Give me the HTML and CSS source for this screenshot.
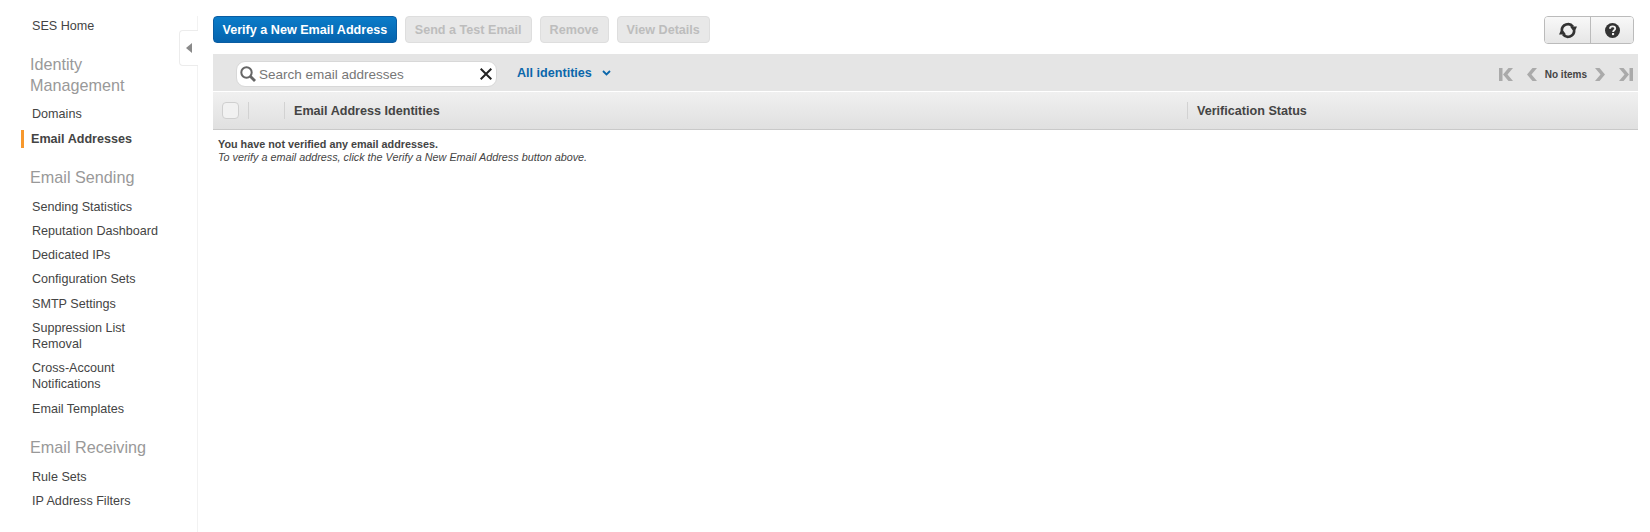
FILE: index.html
```html
<!DOCTYPE html>
<html lang="en">
<head>
<meta charset="utf-8">
<title>SES Email Addresses</title>
<link rel="stylesheet" href="styles.css">
</head>
<body>
<div class="page">
  <nav class="sidebar">
    <a class="nav-item home">SES Home</a>
    <h2 class="nav-heading">Identity Management</h2>
    <a class="nav-item">Domains</a>
    <a class="nav-item active">Email Addresses</a>
    <h2 class="nav-heading">Email Sending</h2>
    <a class="nav-item">Sending Statistics</a>
    <a class="nav-item">Reputation Dashboard</a>
    <a class="nav-item">Dedicated IPs</a>
    <a class="nav-item">Configuration Sets</a>
    <a class="nav-item">SMTP Settings</a>
    <a class="nav-item">Suppression List Removal</a>
    <a class="nav-item">Cross-Account Notifications</a>
    <a class="nav-item">Email Templates</a>
    <h2 class="nav-heading">Email Receiving</h2>
    <a class="nav-item">Rule Sets</a>
    <a class="nav-item">IP Address Filters</a>
    <div class="collapse"><svg width="6" height="10" viewBox="0 0 6 10"><path d="M6 0V10L0 5Z" fill="#8a8a8a"/></svg></div>
  </nav>
  <main class="main">
    <div class="toolbar">
      <button class="btn primary">Verify a New Email Address</button>
      <button class="btn disabled">Send a Test Email</button>
      <button class="btn disabled">Remove</button>
      <button class="btn disabled">View Details</button>
      <div class="tool-group">
        <button class="tool refresh" aria-label="Refresh">
          <svg width="18" height="17" viewBox="0 0 18 17"><path d="M2.800 8.500A6.200 6.200 0 0 1 14 4.800" fill="none" stroke="#333" stroke-width="2.700"/><path d="M11 4.500 18 4.500 15.300 10.500Z" fill="#333"/><path d="M15.200 8.500A6.200 6.200 0 0 1 4 12.200" fill="none" stroke="#333" stroke-width="2.700"/><path d="M7 12.500 0 12.500 2.700 6.500Z" fill="#333"/></svg>
        </button>
        <button class="tool help" aria-label="Help">
          <svg width="15" height="15" viewBox="0 0 15 15"><circle cx="7.500" cy="7.500" r="7.500" fill="#333"/><path d="M5 5.700C5.100 4.200 6.200 3.400 7.600 3.400 9.100 3.400 10.200 4.300 10.200 5.600 10.200 7.300 8.100 7.300 8.100 9" fill="none" stroke="#f0f0f0" stroke-width="1.900"/><rect x="7" y="10" width="2.100" height="2.100" fill="#f0f0f0"/></svg>
        </button>
      </div>
    </div>
    <div class="filter-bar">
      <div class="search">
        <svg class="search-icon" width="16" height="16" viewBox="0 0 16 16"><circle cx="6.500" cy="6.500" r="5.200" fill="none" stroke="#666" stroke-width="2"/><path d="M10.500 10.500 15 15" stroke="#666" stroke-width="2.800"/></svg>
        <span class="placeholder">Search email addresses</span>
        <svg class="clear-icon" width="12" height="12" viewBox="0 0 12 12"><path d="M.7.700 11.300 11.300M11.300.700 .7 11.300" stroke="#222" stroke-width="2"/></svg>
      </div>
      <a class="scope">All identities<svg width="9" height="6" viewBox="0 0 9 6"><path d="M1 1 4.500 4.500 8 1" fill="none" stroke="#0b67ab" stroke-width="1.800"/></svg></a>
      <div class="pager">
        <svg width="14" height="13" viewBox="0 0 14 13"><path d="M0 0H3.500V13H0ZM9.500 0 4 6.500 9.500 13H14L8.500 6.500 14 0Z" fill="#aaa"/></svg>
        <svg class="prev" width="10" height="13" viewBox="0 0 10 13"><path d="M5.500 0 0 6.500 5.500 13H10L4.500 6.500 10 0Z" fill="#aaa"/></svg>
        <span class="pager-text">No items</span>
        <svg class="next" width="10" height="13" viewBox="0 0 10 13"><path d="M4.500 0 10 6.500 4.500 13H0L5.500 6.500 0 0Z" fill="#aaa"/></svg>
        <svg class="last" width="14" height="13" viewBox="0 0 14 13"><path d="M14 0H10.500V13H14ZM4.500 0 10 6.500 4.500 13H0L5.500 6.500 0 0Z" fill="#aaa"/></svg>
      </div>
    </div>
    <div class="table-head">
      <div class="cell check"><span class="checkbox"></span></div>
      <div class="cell spacer"></div>
      <div class="cell identity">Email Address Identities</div>
      <div class="cell status">Verification Status</div>
    </div>
    <div class="empty">
      <strong>You have not verified any email addresses.</strong>
      <em>To verify a email address, click the Verify a New Email Address button above.</em>
    </div>
  </main>
</div>
</body>
</html>
```
FILE: styles.css
```css
* { box-sizing: border-box; }
html, body { margin: 0; height: 100%; background: #fff; overflow: hidden; }
body { font-family: "Liberation Sans", Arial, sans-serif; color: #444; }
.page { display: flex; height: 532px; padding-top: 16px; }

.sidebar {
  position: relative;
  width: 198px;
  flex: none;
  border-right: 1px solid #f2f2f2;
  padding: 1.6px 24px 0 0;
}
.nav-item {
  display: block;
  padding: 0 0 8px 32px;
  font-size: 12.6px;
  line-height: 16.2px;
  color: #444;
}
.nav-item.active {
  position: relative;
  padding-left: 31px;
  font-weight: 700;
}
.nav-item.active::before {
  content: "";
  position: absolute;
  left: 21px;
  top: -1px;
  width: 3px;
  height: 18px;
  background: #f7982d;
}
.nav-heading {
  margin: 0;
  padding: 12.6px 0 10.5px 30px;
  font-size: 16.2px;
  font-weight: 400;
  line-height: 20.8px;
  color: #999;
}
.collapse {
  position: absolute;
  top: 14px;
  right: -1px;
  width: 19px;
  height: 36px;
  display: flex;
  align-items: center;
  justify-content: center;
  background: #fff;
  border: 1px solid #ececec;
  border-right: 0;
  border-radius: 4px 0 0 4px;
}

.main { flex: 1; min-width: 0; padding: 0 12px 0 15px; }
.toolbar { display: flex; align-items: flex-start; gap: 8px; height: 38px; }
.btn {
  height: 27px;
  padding: 1px 9px 0;
  border-radius: 4px;
  font: 700 12.6px/1 "Liberation Sans", Arial, sans-serif;
  cursor: default;
}
.btn.primary {
  padding: 1px 8.5px 0;
  color: #fff;
  background: linear-gradient(#0a7cc9, #0563ad);
  border: 1px solid #0a5da2;
}
.btn.disabled {
  color: #bdbdbd;
  background: #e8e8e8;
  border: 1px solid #dedede;
}
.tool-group {
  margin: 0 4px 0 auto;
  display: flex;
  height: 28px;
  border: 1px solid #bbb;
  border-radius: 4px;
  overflow: hidden;
}
.tool {
  height: 100%;
  padding: 0;
  border: 0;
  display: flex;
  align-items: center;
  justify-content: center;
  background: linear-gradient(#f8f8f8, #e6e6e6);
}
.refresh { width: 46px; border-right: 1px solid #bbb; }
.help { width: 42px; }

.filter-bar {
  display: flex;
  align-items: flex-start;
  height: 37px;
  background: #e5e5e5;
  padding: 7px 0 0 22.500px;
}
.search {
  width: 261.500px;
  height: 26px;
  display: flex;
  align-items: center;
  padding: 0 4px 0 3.500px;
  background: #fff;
  border: 1px solid #d8d8d8;
  border-radius: 9px;
}
.search-icon { flex: none; }
.placeholder { margin-left: 3px; font-size: 13.5px; color: #777; }
.clear-icon { flex: none; margin-left: auto; }
.scope {
  display: flex;
  align-items: center;
  gap: 10px;
  margin-left: 20px;
  height: 23px;
  font-size: 12.6px;
  font-weight: 700;
  color: #0b67ab;
}
.pager {
  margin-left: auto;
  display: flex;
  align-items: center;
  height: 26px;
  padding-right: 5px;
}
.prev { margin-left: 13.500px; }
.pager-text { margin: 0 8px; font-size: 10px; font-weight: 700; color: #444; }
.last { margin-left: 14px; }

.table-head {
  display: flex;
  align-items: center;
  height: 38px;
  margin-top: 1px;
  background: linear-gradient(#f0f0f0, #e0e0e0);
  border-bottom: 1px solid #c9c9c9;
}
.cell { height: 17px; display: flex; align-items: center; font-size: 12.6px; font-weight: 700; color: #444; }
.check { width: 35px; padding-left: 9px; }
.checkbox {
  width: 17px;
  height: 17px;
  border: 1px solid #cfcfcf;
  border-radius: 4px;
  background: #f1f1f1;
}
.spacer { width: 36px; border-left: 1px solid #d2d2d2; }
.identity { flex: 1; padding-left: 9px; border-left: 1px solid #d2d2d2; }
.status { width: 451px; padding-left: 9px; border-left: 1px solid #d2d2d2; }

.empty { padding: 8px 0 0 5px; font-size: 10.8px; line-height: 12.5px; color: #444; }
.empty strong, .empty em { display: block; }
```
